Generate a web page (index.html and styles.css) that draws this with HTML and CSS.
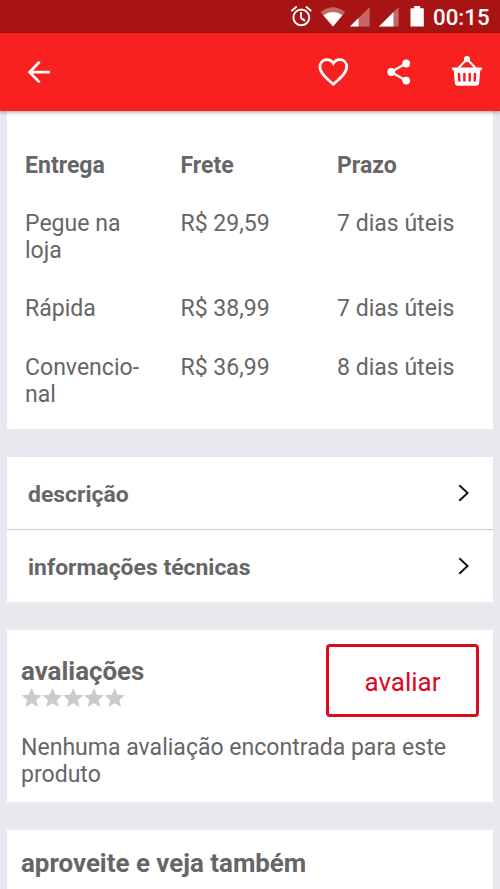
FILE: index.html
```html
<!DOCTYPE html>
<html lang="pt-BR">
<head>
<meta charset="utf-8">
<title>Produto</title>
<link rel="stylesheet" href="styles.css">
</head>
<body>
<div class="statusbar">
  <svg width="152" height="33" viewBox="0 0 152 33" aria-hidden="true">
    <g fill="none" stroke="#fff" stroke-width="1.9" stroke-linecap="round">
      <circle cx="21.3" cy="17.4" r="7.9"/>
      <path d="M21 12.8v5.2l3.4 2.4M12 10.6l4.2-3.5M26.400 7.100l4.200 3.500"/>
    </g>
    <path d="M40.500 12.200Q53 2.200 65.300 12.200L53 26.500z" fill="#fff" opacity=".35"/>
    <path d="M43.300 15.200Q53 8.600 62.400 15.200L53 26.500z" fill="#fff"/>
    <path d="M70 26.500L89.700 7v19.500z" fill="#fff" opacity=".35"/>
    <path d="M70 26.500L78.500 18v8.500z" fill="#fff"/>
    <path d="M99 26.500L118.700 7v19.500z" fill="#fff" opacity=".35"/>
    <path d="M99 26.500L113.500 12v14.500z" fill="#fff"/>
    <path d="M130.500 8.200h3.700V6h6v2.200h3.600v18.300h-13.300z" fill="#fff"/>
  </svg>
  <span class="clock">00:15</span>
</div>
<header class="appbar">
  <svg class="back" width="24" height="24" viewBox="0 0 24 24" aria-hidden="true"><path d="M12.600 1.800L2.600 12.200l10 10.200M2.700 12.200H23" fill="none" stroke="#fff" stroke-width="2.700"/></svg>
  <svg class="heart" width="32" height="30" viewBox="0 0 32 30" aria-hidden="true"><path d="M16.300 27.200C7.300 19.500 2.900 15 2.900 9.800C2.900 5.500 5.900 2.600 9.800 2.600C12.600 2.600 14.900 4 16.300 6.400C17.700 4 20 2.600 22.800 2.600C26.700 2.600 29.700 5.500 29.700 9.800C29.700 15 25.300 19.500 16.300 27.200z" fill="none" stroke="#fff" stroke-width="2.700"/></svg>
  <svg class="share" width="24" height="26" viewBox="0 0 24 26" aria-hidden="true"><path d="M19 4.500L4 13l15 8.500" fill="none" stroke="#fff" stroke-width="2.300"/><g fill="#fff"><circle cx="19.200" cy="4.500" r="3.900"/><circle cx="4.300" cy="13" r="3.900"/><circle cx="19.200" cy="21.600" r="3.900"/></g></svg>
  <svg class="basket" width="32" height="32" viewBox="0 0 32 32" aria-hidden="true"><circle cx="16" cy="4" r="3" fill="#fff"/><path d="M7.500 13L16 4l8.500 9" fill="none" stroke="#fff" stroke-width="2"/><path d="M1.500 12.500h29q1 .3.500 2.300l-1.800.6-1 12.300q-.3 3-3 3H6.800q-2.700 0-3-3L2.800 15.400 1 14.800q-.5-2 .5-2.300z" fill="#fff"/><path d="M8 19l.3 6.500M13.400 19v6.500M18.700 19v6.500M24 19l-.3 6.500" stroke="#f92020" stroke-width="2.500" stroke-linecap="round"/></svg>
</header>
<main class="page">
  <section class="card shipping">
    <div class="row head"><span>Entrega</span><span>Frete</span><span>Prazo</span></div>
    <div class="row"><span>Pegue na<br>loja</span><span>R$ 29,59</span><span>7 dias úteis</span></div>
    <div class="row"><span>Rápida</span><span>R$ 38,99</span><span>7 dias úteis</span></div>
    <div class="row"><span>Convencio-<br>nal</span><span>R$ 36,99</span><span>8 dias úteis</span></div>
  </section>
  <section class="card links">
    <a class="link"><span>descrição</span><svg width="12" height="18" viewBox="0 0 12 18" aria-hidden="true"><path d="M1.300 1.200l8.300 7.800-8.300 7.800"/></svg></a>
    <a class="link"><span>informações técnicas</span><svg width="12" height="18" viewBox="0 0 12 18" aria-hidden="true"><path d="M1.300 1.200l8.300 7.800-8.300 7.800"/></svg></a>
  </section>
  <section class="card reviews">
    <div class="review-top">
      <div>
        <h2>avaliações</h2>
        <svg class="stars" width="105" height="20" viewBox="0 0 105 20" aria-hidden="true">
          <defs><path id="star" d="M10 0l2.900 6.700 7.100.6-5.400 4.700 1.700 7L10 15.300 3.700 19l1.700-7L0 7.300l7.100-.6z"/></defs>
          <g fill="#cbcbcb"><use href="#star" x=".7"/><use href="#star" x="21.500"/><use href="#star" x="42.200"/><use href="#star" x="63"/><use href="#star" x="83.700"/></g>
        </svg>
      </div>
      <button class="rate">avaliar</button>
    </div>
    <p>Nenhuma avaliação encontrada para este<br>produto</p>
  </section>
  <section class="card more"><h2>aproveite e veja também</h2></section>
</main>
</body>
</html>
```
FILE: styles.css
```css
* { box-sizing: border-box; }
body {
  margin: 0;
  height: 889px;
  overflow: hidden;
  background: #e8e8ef;
  color: #666;
  font: 23.05px/27.2px Roboto, sans-serif;
}
h2, p { margin: 0; }
svg { display: block; flex: none; }
.statusbar {
  display: flex;
  height: 33px;
  padding-left: 280px;
  background: #a81414;
}
.clock {
  color: #fff;
  font-size: 22.3px;
  font-weight: 500;
  line-height: 35px;
  margin-left: 1px;
}
.appbar {
  position: relative;
  display: flex;
  align-items: center;
  height: 78px;
  padding: 0 17px 0 27px;
  background: #f92020;
  box-shadow: 0 1px 4px rgba(0, 0, 0, .4);
}
.heart { margin-left: 266px; }
.share { margin-left: 38px; }
.basket { margin: 0 0 3px auto; }
.page {
  display: flex;
  flex-direction: column;
  gap: 28px;
  padding: 0 7px;
}
.card { background: #fff; flex: none; }
.shipping {
  display: flex;
  flex-direction: column;
  gap: 31.1px;
  height: 318px;
  padding: 40.6px 18px 0;
}
.row { display: grid; grid-template-columns: 155.5px 156.5px 1fr; }
.head { font-weight: 700; }
.links { height: 145px; }
.link {
  display: flex;
  align-items: center;
  justify-content: space-between;
  height: 72px;
  padding: 3px 23px 0 21px;
  font-weight: 700;
}
.link + .link { height: 73px; border-top: 1px solid #ccc; }
.link span { font-size: 22.95px; }
.link svg { margin-bottom: 3px; }
.link path { fill: none; stroke: #111; stroke-width: 1.9; }
.reviews { height: 172px; padding: 14px 14px 0; }
.review-top { display: flex; justify-content: space-between; height: 73px; }
h2 { font-size: 25.9px; line-height: 30px; font-weight: 700; }
.reviews h2 { margin-top: 12px; }
.stars { margin-top: 2px; }
.rate {
  width: 153px;
  height: 73px;
  padding: 3px 0 0;
  border: 3px solid #d90b20;
  border-radius: 4px;
  background: #fff;
  color: #dc0722;
  font: 26px/30px Roboto, sans-serif;
}
.reviews p { margin-top: 17px; }
.more { height: 80px; padding: 18px 14px; }
```
